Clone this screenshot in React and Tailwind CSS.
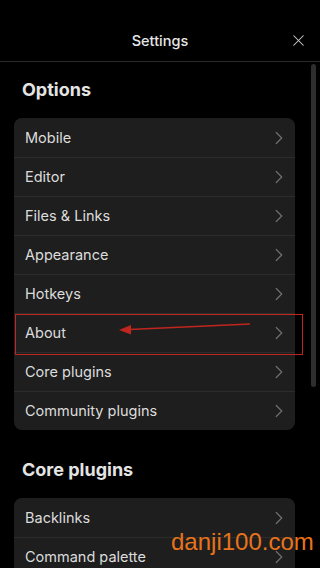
import { ChevronRight, X } from "lucide-react";

const options = [
  "Mobile",
  "Editor",
  "Files & Links",
  "Appearance",
  "Hotkeys",
  "About",
  "Core plugins",
  "Community plugins",
];

const corePlugins = ["Backlinks", "Command palette"];

const Row = ({ label, first }) => (
  <li
    className={`flex h-[39px] items-center justify-between pl-[11px] pr-[5px] ${
      first ? "" : "border-t border-[#2c2c2c]"
    }`}
  >
    <span className="text-[14.5px] text-[#dcdcdc]">{label}</span>
    <ChevronRight size={22} strokeWidth={1.3} className="text-[#6f6f6f]" />
  </li>
);

const Section = ({ title, items, className }) => (
  <section className={className}>
    <h2 className="pl-2 text-[18px] font-bold leading-6 text-[#e4e4e4]">
      {title}
    </h2>
    <ul className="mt-4 overflow-hidden rounded-lg bg-[#1e1e1e]">
      {items.map((item, i) => (
        <Row key={item} label={item} first={i === 0} />
      ))}
    </ul>
  </section>
);

export default function App() {
  return (
    <div
      className="relative h-[568px] w-[320px] overflow-hidden bg-black"
      style={{ fontFamily: "Inter, 'Noto Sans', sans-serif" }}
    >
      <header className="relative flex h-[62px] items-center justify-center border-b border-[#2a2a2a] pt-[21px]">
        <span className="text-[14.5px] font-medium text-[#e6e6e6]">Settings</span>
        <button className="absolute right-[12px] top-[31px] text-[#d0d0d0]">
          <X size={19} strokeWidth={1.3} />
        </button>
      </header>

      <div className="pl-[14px] pr-[25px]">
        <Section title="Options" items={options} className="pt-[16px]" />
        <Section title="Core plugins" items={corePlugins} className="pt-[28px]" />
      </div>

      {/* scrollbar */}
      <div className="absolute left-[311px] top-[64px] h-[323px] w-[5px] rounded-full bg-[#2e2e2e]" />

      {/* annotation */}
      <div className="absolute left-[15px] top-[314px] h-[41px] w-[288px] border border-[#c0261e]" />
      <svg
        className="absolute left-0 top-0"
        width="320"
        height="568"
        viewBox="0 0 320 568"
      >
        <line x1="250" y1="324" x2="124" y2="329.8" stroke="#c0261e" strokeWidth="1.6" />
        <path d="M131 325 L119 330 L131 334.5 Z" fill="#c0261e" />
      </svg>

      <div
        className="absolute left-[171px] top-[526px] text-[24px] leading-8 text-[#e8731c]"
        style={{ fontFamily: "'Liberation Sans', Arial, sans-serif" }}
      >
        danji100.com
      </div>
    </div>
  );
}
